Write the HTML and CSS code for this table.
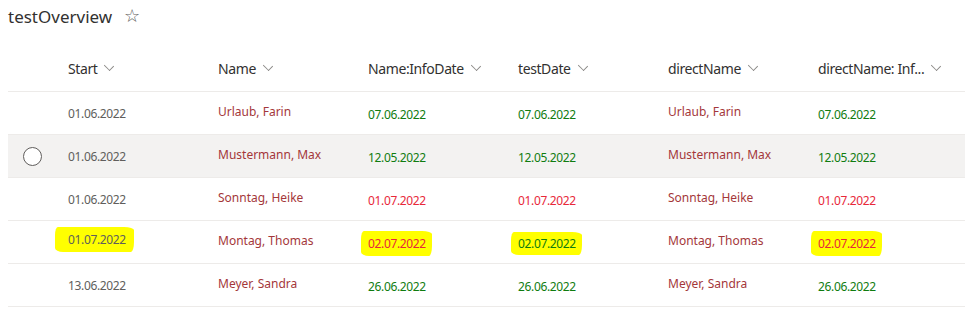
FILE: index.html
```html
<!DOCTYPE html>
<html lang="en">
<head>
    <meta charset="UTF-8">
    <title>testOverview</title>
    <link rel="stylesheet" href="styles.css">
</head>
<body>
    <div class="title-bar">
        <h1 class="title">testOverview</h1>
        <span class="star">&#9734;</span>
    </div>

    <div class="list">
        <div class="row header">
            <div class="check"></div>
            <div class="cell">Start <span class="chevron"></span></div>
            <div class="cell">Name <span class="chevron"></span></div>
            <div class="cell">Name:InfoDate <span class="chevron"></span></div>
            <div class="cell">testDate <span class="chevron"></span></div>
            <div class="cell">directName <span class="chevron"></span></div>
            <div class="cell">directName: Inf... <span class="chevron"></span></div>
        </div>

        <div class="row">
            <div class="check"></div>
            <div class="cell date">01.06.2022</div>
            <div class="cell name">Urlaub, Farin</div>
            <div class="cell date ok">07.06.2022</div>
            <div class="cell date ok">07.06.2022</div>
            <div class="cell name">Urlaub, Farin</div>
            <div class="cell date ok">07.06.2022</div>
        </div>

        <div class="row hover">
            <div class="check"><span class="radio"></span></div>
            <div class="cell date">01.06.2022</div>
            <div class="cell name">Mustermann, Max</div>
            <div class="cell date ok">12.05.2022</div>
            <div class="cell date ok">12.05.2022</div>
            <div class="cell name">Mustermann, Max</div>
            <div class="cell date ok">12.05.2022</div>
        </div>

        <div class="row">
            <div class="check"></div>
            <div class="cell date">01.06.2022</div>
            <div class="cell name">Sonntag, Heike</div>
            <div class="cell date late">01.07.2022</div>
            <div class="cell date late">01.07.2022</div>
            <div class="cell name">Sonntag, Heike</div>
            <div class="cell date late">01.07.2022</div>
        </div>

        <div class="row">
            <div class="check"></div>
            <div class="cell date"><span class="mark mark-start">01.07.2022</span></div>
            <div class="cell name">Montag, Thomas</div>
            <div class="cell date late"><span class="mark mark-a">02.07.2022</span></div>
            <div class="cell date ok"><span class="mark mark-b">02.07.2022</span></div>
            <div class="cell name">Montag, Thomas</div>
            <div class="cell date late"><span class="mark mark-c">02.07.2022</span></div>
        </div>

        <div class="row">
            <div class="check"></div>
            <div class="cell date">13.06.2022</div>
            <div class="cell name">Meyer, Sandra</div>
            <div class="cell date ok">26.06.2022</div>
            <div class="cell date ok">26.06.2022</div>
            <div class="cell name">Meyer, Sandra</div>
            <div class="cell date ok">26.06.2022</div>
        </div>
    </div>
</body>
</html>
```

FILE: styles.css
```css
body {
    font-family: "Segoe UI", "Noto Sans", sans-serif;
    margin: 0;
    padding: 0 0 0 8px;
    background-color: #fff;
    color: #323130;
}
.title-bar {
    display: flex;
    align-items: center;
    height: 32px;
    gap: 12px;
}
.title {
    margin: 0;
    font-size: 17px;
    font-weight: 400;
    color: #323130;
}
.star {
    font-size: 18px;
    color: #605e5c;
    margin-top: -2px;
}
.list {
    margin-top: 16px;
}
.row {
    display: grid;
    grid-template-columns: 48px repeat(5, 150px) 1fr;
    height: 42px;
    align-items: center;
    border-bottom: 1px solid #edebe9;
}
.row.header {
    height: 43px;
}
.row.hover {
    background: #f3f2f1;
}
.check {
    display: flex;
    justify-content: center;
    align-items: center;
}
.radio {
    display: block;
    width: 17px;
    height: 17px;
    border: 1px solid #605e5c;
    border-radius: 50%;
    background: #fff;
}
.cell {
    padding-left: 12px;
    white-space: nowrap;
    font-size: 12px;
}
.header .cell {
    font-size: 14px;
    letter-spacing: -0.4px;
    color: #323130;
    display: flex;
    align-items: center;
    gap: 8px;
    padding-bottom: 2px;
}
.chevron {
    display: inline-block;
    width: 7px;
    height: 7px;
    border-right: 1px solid #8a8886;
    border-bottom: 1px solid #8a8886;
    transform: rotate(45deg) scaleY(0.8);
    margin-top: -5px;
}
.date {
    color: #605e5c;
    letter-spacing: -0.35px;
}
.name {
    color: #a4373a;
    padding-bottom: 3px;
}
.ok {
    color: #107c10;
    padding-top: 2px;
}
.late {
    color: #e8283a;
    padding-top: 2px;
}
.mark {
    background: #ffff00;
    padding: 3px 7px;
    margin-left: -7px;
    border-radius: 3px 10px 3px 8px / 8px 3px 10px 4px;
}
.mark-start {
    padding: 4px 8px 4px 13px;
    margin-left: -13px;
    position: relative;
    top: -3px;
}
.mark-a {
    padding: 4px 6px 4px 7px;
}
.mark-b {
    padding: 3px 6px 3px 7px;
}
.mark-c {
    padding: 4px 6px 4px 7px;
}
```
